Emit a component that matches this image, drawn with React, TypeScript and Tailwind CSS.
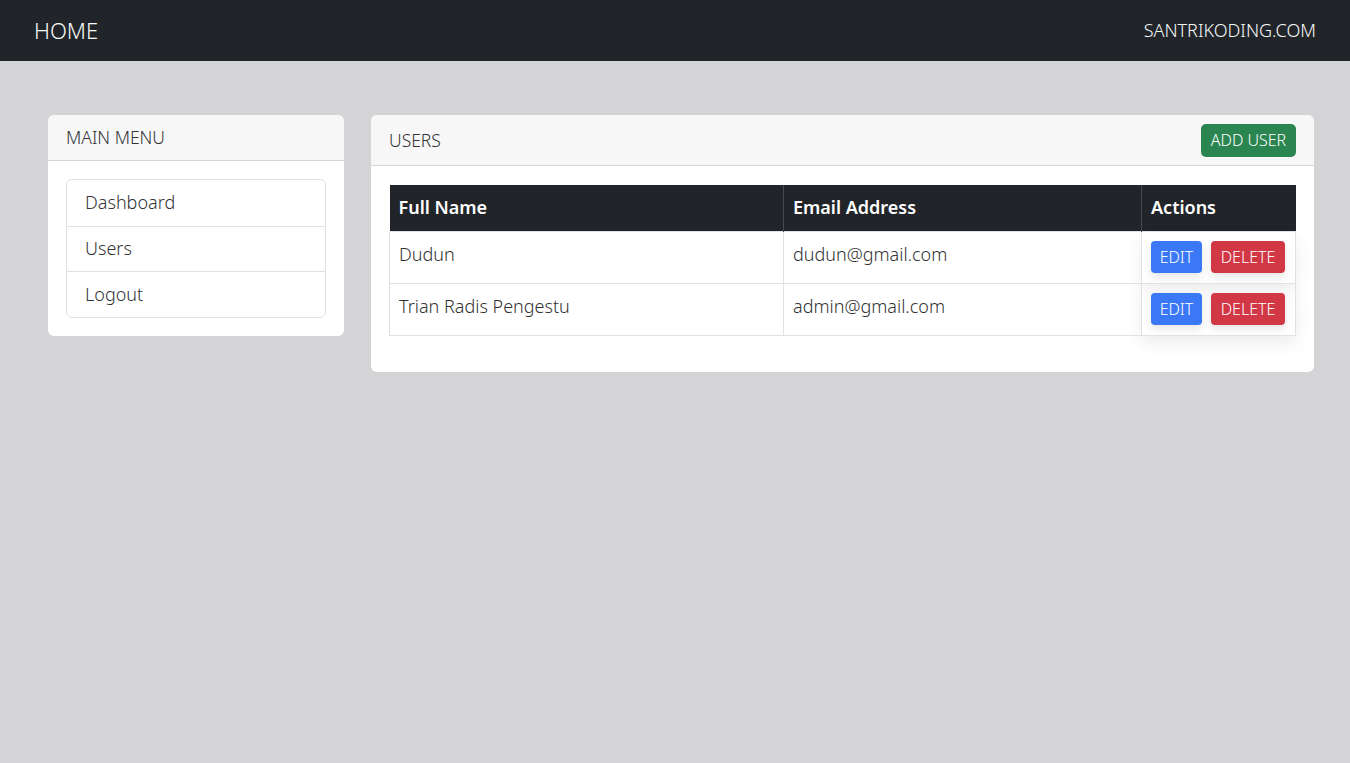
import React from "react";

const users = [
  { id: 1, name: "Dudun", email: "dudun@gmail.com" },
  { id: 2, name: "Trian Radis Pengestu", email: "admin@gmail.com" },
];

const menu = ["Dashboard", "Users", "Logout"];

export default function App() {
  return (
    <div
      className="min-h-screen bg-[#d4d3d6] text-[#212529]"
      style={{ fontFamily: "'Noto Sans', Lato, sans-serif" }}
    >
      <nav className="h-[61px] bg-[#212529] flex items-center justify-between px-[34px] text-[#f8f9fa] font-light">
        <span className="text-[22px]">HOME</span>
        <span className="text-[18px]">SANTRIKODING.COM</span>
      </nav>

      <div className="flex items-start gap-[27px] pl-[48px] pr-[36px] pt-[54px]">
        {/* sidebar */}
        <div className="w-[296px] shrink-0 bg-white rounded-[6px] overflow-hidden">
          <div className="h-[46px] flex items-center px-[18px] bg-[#f7f7f8] border-b border-[#d6d6d9] text-[17.5px] font-light text-[#333]">
            MAIN MENU
          </div>
          <div className="p-[18px]">
            <ul className="border border-[#dee2e6] rounded-[6px]">
              {menu.map((m, i) => (
                <li
                  key={m}
                  className={
                    "h-[45.5px] flex items-center px-[18px] text-[18px] font-light text-[#333] " +
                    (i > 0 ? "border-t border-[#dee2e6]" : "")
                  }
                >
                  {m}
                </li>
              ))}
            </ul>
          </div>
        </div>

        {/* users card */}
        <div className="w-[943px] shrink-0 bg-white rounded-[6px] overflow-hidden">
          <div className="h-[51px] flex items-center justify-between px-[18px] bg-[#f7f7f8] border-b border-[#d6d6d9]">
            <span className="text-[17.5px] font-light text-[#333]">USERS</span>
            <button className="h-[33px] w-[95px] rounded-[5px] bg-[#2b8550] text-white text-[16px] font-light">
              ADD USER
            </button>
          </div>
          <div className="px-[18px] pt-[19px] pb-[36px]">
            <table className="w-full border-collapse">
              <thead>
                <tr className="bg-[#212529] text-white h-[46px] text-[18px]">
                  <th className="text-left font-semibold px-[9px] w-[394px] border-r border-[#444a50]">Full Name</th>
                  <th className="text-left font-semibold px-[9px] w-[358px] border-r border-[#444a50]">Email Address</th>
                  <th className="text-left font-semibold px-[9px]">Actions</th>
                </tr>
              </thead>
              <tbody>
                {users.map((u) => (
                  <tr key={u.id} className="h-[52px]">
                    <td className="border border-[#dee2e6] px-[9px] align-top pt-[9px] text-[18px] font-light text-[#333]">{u.name}</td>
                    <td className="border border-[#dee2e6] px-[9px] align-top pt-[9px] text-[18px] font-light text-[#333]">{u.email}</td>
                    <td className="border border-[#dee2e6] px-[9px] shadow-[0_8px_16px_rgba(0,0,0,0.08)]">
                      <div className="flex gap-[9px]">
                        <button className="h-[32px] w-[51px] rounded-[4px] bg-[#3b78f6] text-white text-[16px] font-light shadow-[0_4px_8px_rgba(0,0,0,0.1)]">
                          EDIT
                        </button>
                        <button className="h-[32px] w-[74px] rounded-[4px] bg-[#d23746] text-white text-[16px] font-light shadow-[0_4px_8px_rgba(0,0,0,0.1)]">
                          DELETE
                        </button>
                      </div>
                    </td>
                  </tr>
                ))}
              </tbody>
            </table>
          </div>
        </div>
      </div>
    </div>
  );
}
